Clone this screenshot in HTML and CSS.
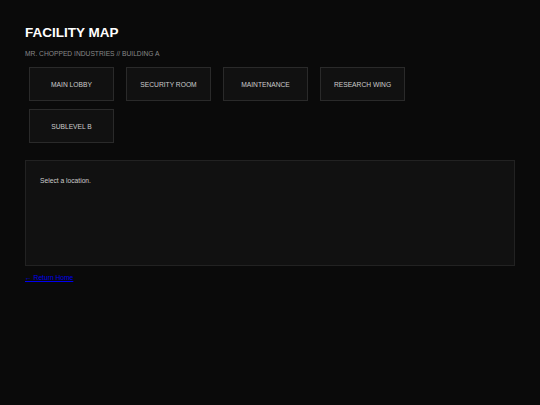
FILE: index.html
```html
<!DOCTYPE html>
<html>
<head>
<meta charset="utf-8">
<link rel="stylesheet" href="styles.css">
</head>
<body>
<div class="page">
  <h1 class="title">FACILITY MAP</h1>
  <p class="subtitle">MR. CHOPPED INDUSTRIES // BUILDING A</p>
  <div class="locations">
    <button class="loc">MAIN LOBBY</button>
    <button class="loc">SECURITY ROOM</button>
    <button class="loc">MAINTENANCE</button>
    <button class="loc">RESEARCH WING</button>
    <button class="loc">SUBLEVEL B</button>
  </div>
  <div class="panel">Select a location.</div>
  <a class="home" href="#">← Return Home</a>
</div>
</body>
</html>
```
FILE: styles.css
```css
html, body {
  margin: 0;
  padding: 0;
  background: #0a0a0a;
  height: 100%;
}
.page {
  padding: 24px 25px;
  font-family: "Liberation Sans", Arial, sans-serif;
  color: #ccc;
}
.title {
  margin: 0;
  font-size: 13.5px;
  line-height: 17px;
  font-weight: bold;
  color: #fff;
}
.subtitle {
  margin: 9px 0 0 0;
  font-size: 6.7px;
  line-height: 8px;
  color: #888;
}
.locations {
  display: flex;
  flex-wrap: wrap;
  gap: 8px 12px;
  padding: 4px;
  margin-top: 5px;
  width: 400px;
}
.loc {
  width: 85px;
  height: 34px;
  background: #111;
  border: 1px solid #2a2a2a;
  color: #ccc;
  font-family: "Liberation Sans", Arial, sans-serif;
  font-size: 6.7px;
  padding: 0;
  margin: 0;
}
.panel {
  margin-top: 13px;
  height: 72px;
  background: #111;
  border: 1px solid #222;
  padding: 16px 14px;
  font-size: 6.7px;
  line-height: 8px;
  color: #ccc;
}
.home {
  display: inline-block;
  margin-top: 6px;
  font-size: 6.7px;
  line-height: 8px;
  color: #00e;
}
```
